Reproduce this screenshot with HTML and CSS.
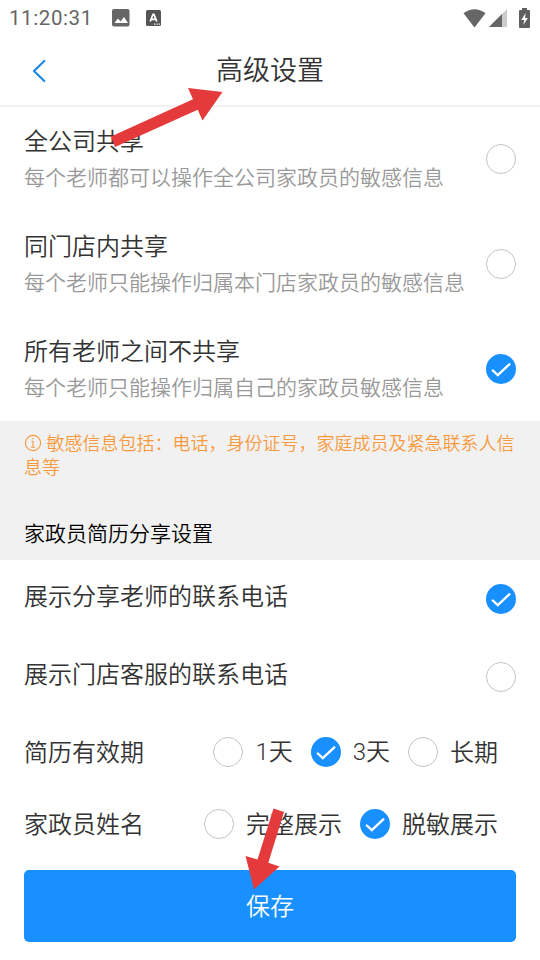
FILE: index.html
```html
<!DOCTYPE html>
<html lang="zh-CN">
<head>
<meta charset="utf-8">
<title>高级设置</title>
<link rel="stylesheet" href="styles.css">
</head>
<body>
<div class="screen">
  <div class="status">
    <span class="clock">11:20:31</span>
    <svg class="photo" width="18" height="18" viewBox="0 0 18 18"><rect width="17.5" height="17.5" rx="2" fill="#666"/><path d="M2.5 14 6 9.5l2.5 3L12 8l4 6z" fill="#fff"/></svg>
    <svg class="lang" width="15" height="16" viewBox="0 0 15 16"><rect width="15" height="16" rx="1.5" fill="#555"/><path d="M4.2 11.5 7.1 4.5h.8l2.9 7M5.4 9.3h4.2" fill="none" stroke="#fff" stroke-width="1.8"/><path d="M8 14.2h1.3M10.4 14.2h1.3M12.6 14.2h1.3" stroke="#fff" stroke-width="1.3"/></svg>
    <svg class="wifi" width="23" height="19" viewBox="0 0 23 19"><path d="M.5 4.2Q11.5-3.8 22.5 4.2L11.5 18.5z" fill="#666"/></svg>
    <svg class="signal" width="18" height="18" viewBox="0 0 18 18"><path d="M18 0v18H0z" fill="#ccc"/><path d="M13 5v13H0z" fill="#666"/></svg>
    <svg class="battery" width="11" height="20" viewBox="0 0 11 20"><path d="M3 0h5v2h2q1 0 1 1v16q0 1-1 1H1q-1 0-1-1V3q0-1 1-1h2z" fill="#5f5f5f"/><path d="M6.7 5 2.2 12h3l-.9 5 4.6-7H6z" fill="#fff"/></svg>
  </div>
  <header class="nav">
    <svg class="back" width="14" height="24" viewBox="0 0 14 24"><path d="M12.3 2 2 12l10.3 10" fill="none" stroke="#1e88e5" stroke-width="2.2" stroke-linecap="round" stroke-linejoin="round"/></svg>
    <h1>高级设置</h1>
  </header>
  <main>
    <div class="option">
      <div class="copy"><div class="name">全公司共享</div><div class="desc">每个老师都可以操作全公司家政员的敏感信息</div></div>
      <span class="radio"></span>
    </div>
    <div class="option">
      <div class="copy"><div class="name">同门店内共享</div><div class="desc">每个老师只能操作归属本门店家政员的敏感信息</div></div>
      <span class="radio"></span>
    </div>
    <div class="option">
      <div class="copy"><div class="name">所有老师之间不共享</div><div class="desc">每个老师只能操作归属自己的家政员敏感信息</div></div>
      <span class="radio on"><svg width="30" height="30" viewBox="0 0 30 30"><path d="M6.800 16.500l5 4.700L23.300 10.300" /></svg></span>
    </div>
    <section class="band">
      <p class="note"><svg class="info" width="18" height="18" viewBox="0 0 18 18"><circle cx="9" cy="9" r="7.6"/><path d="M7.5 7.3H9v5.8M7 13.2h4M9 4v1.5"/></svg>敏感信息包括：电话，身份证号，家庭成员及紧急联系人信息等</p>
      <h2>家政员简历分享设置</h2>
    </section>
    <div class="toggle">
      <span class="name">展示分享老师的联系电话</span>
      <span class="radio on"><svg width="30" height="30" viewBox="0 0 30 30"><path d="M6.800 16.500l5 4.700L23.300 10.300" /></svg></span>
    </div>
    <div class="toggle">
      <span class="name">展示门店客服的联系电话</span>
      <span class="radio"></span>
    </div>
    <div class="choices">
      <span class="name">简历有效期</span>
      <div class="group">
        <label><span class="radio"></span><span class="name"><span class="num">1</span>天</span></label>
        <label><span class="radio on"><svg width="30" height="30" viewBox="0 0 30 30"><path d="M6.800 16.500l5 4.700L23.300 10.300" /></svg></span><span class="name"><span class="num">3</span>天</span></label>
        <label><span class="radio"></span><span class="name">长期</span></label>
      </div>
    </div>
    <div class="choices">
      <span class="name">家政员姓名</span>
      <div class="group">
        <label><span class="radio"></span><span class="name">完整展示</span></label>
        <label><span class="radio on"><svg width="30" height="30" viewBox="0 0 30 30"><path d="M6.800 16.500l5 4.700L23.300 10.300" /></svg></span><span class="name">脱敏展示</span></label>
      </div>
    </div>
    <button class="save">保存</button>
  </main>
  <svg class="arrows" width="540" height="960" viewBox="0 0 540 960">
    <path d="M111 136.500 193 99.300 188 88 222.500 92 202.500 120.500 197.700 109.800 115 147z"/>
    <path d="M273.500 808.500 284 812 268.300 862.800 279.500 866.500 254 889.500 245.500 856 257.500 859.500z"/>
  </svg>
</div>
</body>
</html>
```
FILE: styles.css
```css
* { box-sizing: border-box; margin: 0; padding: 0; }
body {
  background: #fff;
  color: #333;
  font-family: "Noto Sans CJK SC", "Noto Sans", sans-serif;
  font-weight: 350;
}
.screen { position: relative; width: 540px; height: 960px; overflow: hidden; }
.status { display: flex; align-items: center; height: 36px; padding: 0 10px 0 9px; }
.clock { width: 83px; font: 20.5px/38px Roboto, sans-serif; letter-spacing: 0.6px; color: #666; white-space: nowrap; }
.photo { margin-left: 20px; }
.lang { margin-left: 16px; }
.wifi { margin-left: auto; }
.signal { margin-left: 3px; }
.battery { margin-left: 12px; }
.nav {
  display: grid;
  grid-template-columns: 60px 1fr 60px;
  align-items: center;
  height: 71px;
  margin-bottom: -1px;
  border-bottom: 2px solid #f1f1f1;
}
.back { margin: 1px 0 0 32px; }
h1 { padding-bottom: 3px; font-size: 27px; font-weight: 350; line-height: 40px; text-align: center; }
.name { font-size: 24px; line-height: 36px; white-space: nowrap; }
.num { font-family: Roboto, sans-serif; font-weight: 350; }
.desc { font-size: 21px; line-height: 36px; color: #999; white-space: nowrap; }
.option, .toggle, .choices {
  display: flex;
  align-items: center;
  justify-content: space-between;
  padding: 0 24px;
}
.option { height: 105px; }
.copy { padding-bottom: 2px; }
.toggle { height: 78px; }
.toggle > .name { margin-bottom: 9px; }
.choices { height: 72px; padding-right: 42px; }
.choices .name { padding-bottom: 3px; }
.group { display: flex; gap: 18px; }
label { display: flex; align-items: center; gap: 12px; }
.radio { flex: none; width: 30px; height: 30px; border: 1px solid #c4c4c4; border-radius: 50%; }
.radio.on { border: 0; background: #1890ff; }
.radio svg { display: block; fill: none; stroke: #fff; stroke-width: 2.4; stroke-linecap: round; }
.band { height: 139px; padding: 9px 24px 0; background: #f1f1f1; }
.note { font-size: 18px; line-height: 24px; color: #f79a3e; }
.info { margin-right: 4.5px; vertical-align: -2px; fill: none; stroke: #f79a3e; stroke-width: 1.1; }
h2 { margin-top: 36px; font-size: 21px; font-weight: 350; line-height: 36px; color: #000; }
.save {
  display: block;
  width: 492px;
  height: 72px;
  margin: 10px auto 0;
  padding-bottom: 2px;
  border: 0;
  border-radius: 5px;
  background: #1890ff;
  color: #fff;
  font: 350 24px/70px "Noto Sans CJK SC", sans-serif;
}
.arrows { position: absolute; inset: 0; fill: #e53a3c; pointer-events: none; }
```
